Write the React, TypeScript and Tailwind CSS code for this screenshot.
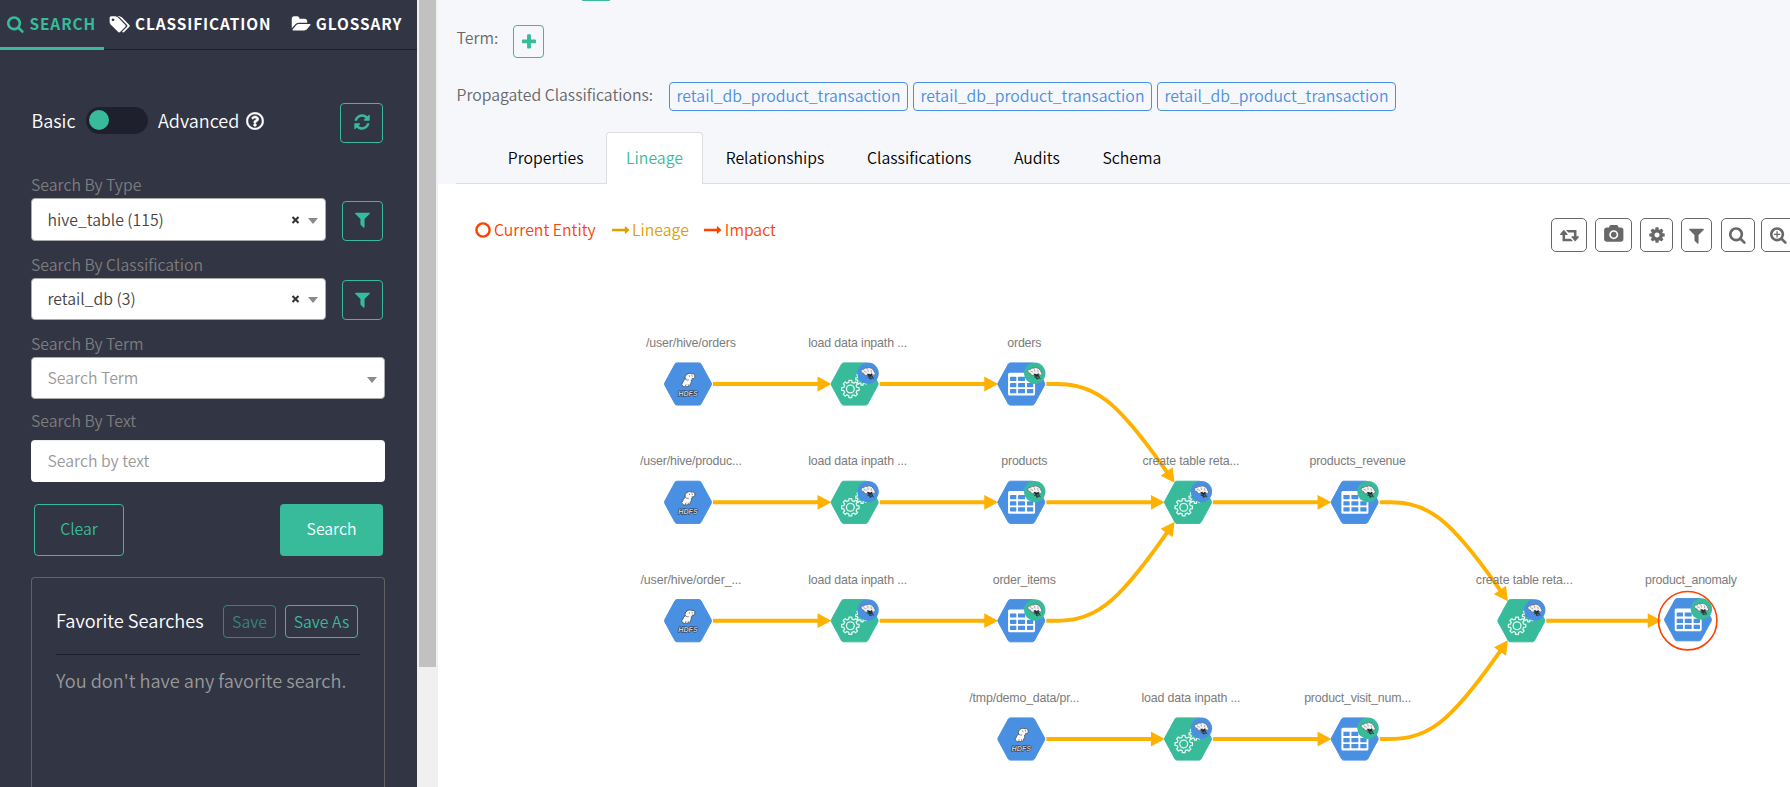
import type { ReactNode } from 'react';
import { FaRegQuestionCircle } from 'react-icons/fa';

/* ---------- icons ---------- */

const ICONS = {
  search:
    'M1152 832q0-185-131.5-316.5t-316.5-131.5-316.5 131.5-131.5 316.5 131.5 316.5 316.5 131.5 316.5-131.5 131.5-316.5zm512 832q0 52-38 90t-90 38q-54 0-90-38l-343-342q-179 124-399 124-143 0-273.5-55.5t-225-150-150-225-55.5-273.5 55.5-273.5 150-225 225-150 273.5-55.5 273.5 55.5 225 150 150 225 55.5 273.5q0 220-124 399l343 343q37 37 37 90z',
  zoomPlus:
    'M1152 832q0-185-131.5-316.5t-316.5-131.5-316.5 131.5-131.5 316.5 131.5 316.5 316.5 131.5 316.5-131.5 131.5-316.5zm512 832q0 52-38 90t-90 38q-54 0-90-38l-343-342q-179 124-399 124-143 0-273.5-55.5t-225-150-150-225-55.5-273.5 55.5-273.5 150-225 225-150 273.5-55.5 273.5 55.5 225 150 150 225 55.5 273.5q0 220-124 399l343 343q37 37 37 90zM1024 800v64q0 13-9.5 22.5t-22.5 9.5h-224v224q0 13-9.5 22.5t-22.5 9.5h-64q-13 0-22.5-9.5t-9.5-22.5v-224h-224q-13 0-22.5-9.5t-9.5-22.5v-64q0-13 9.5-22.5t22.5-9.5h224v-224q0-13 9.5-22.5t22.5-9.5h64q13 0 22.5 9.5t9.5 22.5v224h224q13 0 22.5 9.5t9.5 22.5z',
  refresh:
    'M1639 1056q0 5-1 7-64 268-268 434.5t-478 166.5q-146 0-282.5-55t-243.5-157l-129 129q-19 19-45 19t-45-19-19-45v-448q0-26 19-45t45-19h448q26 0 45 19t19 45-19 45l-137 137q71 66 161 102t187 36q134 0 250-65t186-179q11-17 53-117 8-23 30-23h192q13 0 22.5 9.5t9.5 22.5zm25-800v448q0 26-19 45t-45 19h-448q-26 0-45-19t-19-45 19-45l138-138q-148-137-349-137-134 0-250 65t-186 179q-11 17-53 117-8 23-30 23h-199q-13 0-22.5-9.5t-9.5-22.5v-7q65-268 270-434.5t480-166.5q146 0 284 55.5t245 156.5l130-129q19-19 45-19t45 19 19 45z',
  filter:
    'M1595 295q17 41-14 70l-493 493v742q0 42-39 59-13 5-25 5-27 0-45-19l-256-256q-19-19-19-45v-486l-493-493q-31-29-14-70 17-39 59-39h1280q42 0 59 39z',
  tags: 'M384 448q0-53-37.5-90.5t-90.5-37.5-90.5 37.5-37.5 90.5 37.5 90.5 90.5 37.5 90.5-37.5 37.5-90.5zm1067 576q0 53-37 90l-491 492q-39 37-91 37-53 0-90-37l-715-716q-38-37-64.5-101t-26.5-117v-416q0-52 38-90t90-38h416q53 0 117 26.5t102 64.5l715 714q37 39 37 91zm384 0q0 53-37 90l-491 492q-39 37-91 37-36 0-59-14t-53-45l470-470q37-37 37-90 0-52-37-91l-715-714q-38-38-102-64.5t-117-26.5h224q53 0 117 26.5t102 64.5l715 714q37 39 37 91z',
  folder:
    'M1943 952q0 31-31 66l-336 396q-43 51-120.5 86.5t-143.5 35.5h-1088q-34 0-60.5-13t-26.5-43q0-31 31-66l336-396q43-51 120.5-86.5t143.5-35.5h1088q34 0 60.5 13t26.5 43zm-343-344v160h-832q-94 0-197 47.5t-164 119.5l-337 396-5 6q0-4-.5-12.5t-.5-12.5v-960q0-92 66-158t158-66h320q92 0 158 66t66 158v32h544q92 0 158 66t66 158z',
  plus: 'M1600 736v192q0 40-28 68t-68 28h-416v416q0 40-28 68t-68 28h-192q-40 0-68-28t-28-68v-416h-416q-40 0-68-28t-28-68v-192q0-40 28-68t68-28h416v-416q0-40 28-68t68-28h192q40 0 68 28t28 68v416h416q40 0 68 28t28 68z',
  cog: 'M1152 896q0-106-75-181t-181-75-181 75-75 181 75 181 181 75 181-75 75-181zm512-109v222q0 12-8 23t-20 13l-185 28q-19 54-39 91 35 50 107 138 10 12 10 25t-9 23q-27 37-99 108t-94 71q-12 0-26-9l-138-108q-44 23-91 38-16 136-29 186-7 28-36 28h-222q-14 0-24.5-8.5t-11.5-21.5l-28-184q-49-16-90-37l-141 107q-10 9-25 9-14 0-25-11-126-114-165-168-7-10-7-23 0-12 8-23 15-21 51-66.5t54-70.5q-27-50-41-99l-183-27q-13-2-21-12.5t-8-23.5v-222q0-12 8-23t19-13l186-28q14-46 39-92-40-57-107-138-10-12-10-24 0-10 9-23 26-36 98.5-107.5t94.5-71.5q13 0 26 10l138 107q44-23 91-38 16-136 29-186 7-28 36-28h222q14 0 24.5 8.5t11.5 21.5l28 184q49 16 90 37l142-107q9-9 24-9 13 0 25 10 129 119 165 170 7 8 7 22 0 12-8 23-15 21-51 66.5t-54 70.5q26 50 41 98l183 28q13 2 21 12.5t8 23.5z',
  camera:
    'M960 672q119 0 203.5 84.5t84.5 203.5-84.5 203.5-203.5 84.5-203.5-84.5-84.5-203.5 84.5-203.5 203.5-84.5zm704-416q106 0 181 75t75 181v896q0 106-75 181t-181 75h-1408q-106 0-181-75t-75-181v-896q0-106 75-181t181-75h224l51-136q19-49 69.5-84.5t103.5-35.5h512q53 0 103.5 35.5t69.5 84.5l51 136h224zm-704 1152q185 0 316.5-131.5t131.5-316.5-131.5-316.5-316.5-131.5-316.5 131.5-131.5 316.5 131.5 316.5 316.5 131.5z',
  retweet:
    'M1280 1504q0 13-9.5 22.5t-22.5 9.5h-960q-8 0-13.5-2t-9-7-5.5-8-3-11.5-1-11.5v-600h-192q-26 0-45-19t-19-45q0-24 15-41l320-384q19-22 49-22t49 22l320 384q15 17 15 41 0 26-19 45t-45 19h-192v384h576q16 0 25 11l160 192q7 10 7 21zm640-416q0 24-15 41l-320 384q-20 23-49 23t-49-23l-320-384q-15-17-15-41 0-26 19-45t45-19h192v-384h-576q-16 0-25-12l-160-192q-7-9-7-20 0-13 9.5-22.5t22.5-9.5h960q8 0 13.5 2t9 7 5.5 8 3 11.5 1 11.5v600h192q26 0 45 19t19 45z',
  arrow:
    'M1728 893q0 14-10 24l-384 354q-16 14-35 6-19-9-19-29v-224h-1248q-14 0-23-9t-9-23v-192q0-14 9-23t23-9h1248v-224q0-21 19-29t35 5l384 350q10 10 10 23z',
};

function Icon({ name, className, box = '0 0 1792 1792' }: { name: keyof typeof ICONS; className: string; box?: string }) {
  return (
    <svg viewBox={box} fill="currentColor" overflow="visible" className={`shrink-0 ${className}`}>
      <path d={ICONS[name]} />
    </svg>
  );
}

/* ---------- sidebar ---------- */

function FieldLabel({ children, className }: { children: ReactNode; className: string }) {
  return <div className={`h-5 text-[#7d7d7d] ${className}`}>{children}</div>;
}

function Caret({ className }: { className: string }) {
  return <span className={`h-0 w-0 border-x-5 border-t-6 border-x-transparent border-t-[#8a8a8a] ${className}`} />;
}

function SelectRow({ value, className, gap }: { value: string; className: string; gap: string }) {
  return (
    <div className="flex items-end">
      <div className={`flex w-[295px] items-center rounded-[4px] border border-[#aaa] bg-white pr-[7px] pl-[15.5px] text-[#444] ${className}`}>
        <span className="grow leading-5">{value}</span>
        <svg viewBox="0 0 8 8" className="mr-2 h-2 w-[9px]">
          <path d="M1 1L7 7M7 1L1 7" stroke="#333" strokeWidth="2.1" />
        </svg>
        <Caret className="mt-[2px]" />
      </div>
      <button className={`ml-4 flex h-10 w-[41px] justify-center rounded-[4px] border border-[#38bb9b] pr-px text-[#38bb9b] ${gap}`}>
        <Icon name="filter" className="h-[19px] w-[19px]" />
      </button>
    </div>
  );
}

function Sidebar() {
  return (
    <aside className="flex w-[417px] shrink-0 flex-col bg-[#323544]">
      <nav className="flex h-[50px] shrink-0 border-b border-[#1d202c] text-[15.4px] font-bold tracking-[0.9px] text-white">
        <a className="z-10 -mb-px flex h-[50px] w-[104px] items-center border-b-3 border-[#38bb9b] pt-px pl-[7px] text-[#38bb9b]">
          <Icon name="search" className="mr-[4.5px] h-[18px] w-[18px]" />
          SEARCH
        </a>
        <a className="flex h-12 items-center pl-[6px]">
          <Icon name="tags" box="0 0 1920 1792" className="mr-[4px] h-[19px] w-[21px]" />
          CLASSIFICATION
        </a>
        <a className="flex h-12 items-center pl-[20px]">
          <Icon name="folder" box="0 0 1920 1792" className="mr-[5px] h-[18px] w-[19.5px]" />
          GLOSSARY
        </a>
      </nav>

      <div className="flex flex-col pr-8 pl-[31px]">
        <div className="mt-[53px] flex h-10 text-[18px] text-white">
          <span className="w-[55px] pl-[0.5px] leading-[35px]">Basic</span>
          <span className="mt-1 h-[27px] w-[62px] rounded-full bg-[#1e212d] p-[3px]">
            <span className="block h-5 w-5 rounded-full bg-[#38bb9b]" />
          </span>
          <span className="ml-[10px] w-[88px] leading-[35px]">Advanced</span>
          <FaRegQuestionCircle className="mt-[9px] h-[18px] w-[18px]" strokeWidth="14" stroke="currentColor" />
          <button className="mr-[2px] ml-auto flex h-10 w-[43px] justify-center rounded-[4px] border border-[#38bb9b] pt-[9px] text-[#38bb9b]">
            <Icon name="refresh" className="h-[18px] w-[18px]" />
          </button>
        </div>

        <FieldLabel className="mt-[32px] leading-5">Search By Type</FieldLabel>
        <div className="mt-[3px]">
          <SelectRow value="hive_table (115)" className="h-[43px]" gap="pt-[8px]" />
        </div>
        <FieldLabel className="mt-[13px] leading-[22px]">Search By Classification</FieldLabel>
        <div className="mt-1">
          <SelectRow value="retail_db (3)" className="h-[42px]" gap="pt-[9px]" />
        </div>
        <FieldLabel className="mt-[13px] leading-[22px]">Search By Term</FieldLabel>
        <div className="mt-1 flex h-[42px] items-center justify-between rounded-[4px] border border-[#aaa] bg-white pr-[7px] pl-[15.5px] text-[#999]">
          <span className="leading-5">Search Term</span>
          <Caret className="mt-[3px]" />
        </div>
        <FieldLabel className="mt-[11px] leading-[22px]">Search By Text</FieldLabel>
        <input
          placeholder="Search by text"
          className="mt-[10px] h-[42px] rounded-[4px] bg-white px-[16.5px] pb-px shadow-[inset_0_1px_1px_rgba(0,0,0,0.08)] outline-none placeholder:text-[#999]"
        />

        <div className="mt-[22px] flex h-[52px] justify-between pr-[2px] pl-[3px]">
          <button className="w-[90px] rounded-[4px] border border-[#38bb9b] pb-[2px] text-[#38bb9b]">Clear</button>
          <button className="w-[103px] rounded-[4px] bg-[#38bb9b] pb-[2px] text-white">Search</button>
        </div>

        <section className="mt-[21px] h-[240px] rounded-t-[4px] border border-b-0 border-[#626262] px-6 pt-[27px]">
          <div className="flex h-[50px] border-b border-[#1d202c]">
            <h3 className="w-[167px] text-[18.2px] leading-[31px] text-white">Favorite Searches</h3>
            <button className="h-[33px] w-[53px] rounded-[4px] border border-[#38bb9b] text-[#38bb9b] opacity-60">Save</button>
            <button className="ml-[9px] h-[33px] w-[73px] rounded-[4px] border border-[#38bb9b] text-[#38bb9b]">Save As</button>
          </div>
          <p className="pt-[10px] text-[18.2px] leading-[30px] text-[#999]">You don't have any favorite search.</p>
        </section>
      </div>
    </aside>
  );
}

/* ---------- lineage graph ---------- */

type Kind = 'hdfs' | 'process' | 'table';
const COLS = [0, 1, 2, 3, 4, 5, 6].map((i) => 688 + i * 166.67);
const ROWS = [384, 502.3, 620.7, 739];
const LABEL_BASELINES = [347, 465, 584, 702];
const GREEN = '#38bb9b';
const BLUE = '#4a90e2';

const NODES: { c: number; r: number; kind: Kind; label: string; width: number; current?: boolean }[] = [
  { c: 0, r: 0, kind: 'hdfs', label: '/user/hive/orders', width: 90 },
  { c: 1, r: 0, kind: 'process', label: 'load data inpath ...', width: 99 },
  { c: 2, r: 0, kind: 'table', label: 'orders', width: 34 },
  { c: 0, r: 1, kind: 'hdfs', label: '/user/hive/produc...', width: 102 },
  { c: 1, r: 1, kind: 'process', label: 'load data inpath ...', width: 99 },
  { c: 2, r: 1, kind: 'table', label: 'products', width: 46 },
  { c: 3, r: 1, kind: 'process', label: 'create table reta...', width: 97 },
  { c: 4, r: 1, kind: 'table', label: 'products_revenue', width: 96.5 },
  { c: 0, r: 2, kind: 'hdfs', label: '/user/hive/order_...', width: 101 },
  { c: 1, r: 2, kind: 'process', label: 'load data inpath ...', width: 99 },
  { c: 2, r: 2, kind: 'table', label: 'order_items', width: 63 },
  { c: 5, r: 2, kind: 'process', label: 'create table reta...', width: 97 },
  { c: 6, r: 2, kind: 'table', label: 'product_anomaly', width: 92, current: true },
  { c: 2, r: 3, kind: 'hdfs', label: '/tmp/demo_data/pr...', width: 110 },
  { c: 3, r: 3, kind: 'process', label: 'load data inpath ...', width: 99 },
  { c: 4, r: 3, kind: 'table', label: 'product_visit_num...', width: 107 },
];

const EDGES: [number, number, number][] = [
  // column of the source, source row, target row
  [0, 0, 0],
  [1, 0, 0],
  [2, 0, 1],
  [0, 1, 1],
  [1, 1, 1],
  [2, 1, 1],
  [3, 1, 1],
  [4, 1, 2],
  [0, 2, 2],
  [1, 2, 2],
  [2, 2, 1],
  [5, 2, 2],
  [2, 3, 3],
  [3, 3, 3],
  [4, 3, 2],
];

function Edge({ col, from, to }: { col: number; from: number; to: number }) {
  const x0 = COLS[col] + 25;
  const y0 = ROWS[from];
  if (from === to) {
    const tip = COLS[col + 1] - (col === 5 ? 26.5 : 23.3);
    return (
      <g>
        <path d={`M${x0} ${y0}H${tip - 11}`} fill="none" stroke="#ffb100" strokeWidth="3.9" />
        <path d={`M${tip} ${y0}l-13.8 -7.4v14.8z`} fill="#ffb100" />
      </g>
    );
  }
  const s = to > from ? 1 : -1;
  const x1 = COLS[col] + 83.3;
  const x2 = COLS[col + 1] - 13.4;
  const y2 = ROWS[to] - s * 19.5;
  const angle = (Math.atan2(y2 - y0, x2 - x1) * 180) / Math.PI;
  const mix = (a: number, b: number, t: number) => a + (b - a) * t;
  const d = [
    `M${x0} ${y0}H${mix(x0, x1, 1 / 6)}`,
    `C${mix(x0, x1, 1 / 3)} ${y0} ${mix(x0, x1, 2 / 3)} ${y0} ${(x0 + 4 * x1 + x2) / 6} ${(5 * y0 + y2) / 6}`,
    `C${mix(x1, x2, 1 / 3)} ${mix(y0, y2, 1 / 3)} ${mix(x1, x2, 2 / 3)} ${mix(y0, y2, 2 / 3)} ${mix(x1, x2, 5 / 6)} ${mix(y0, y2, 5 / 6)}`,
    `L${mix(x1, x2, 0.92)} ${mix(y0, y2, 0.92)}`,
  ].join('');
  return (
    <g>
      <path d={d} fill="none" stroke="#ffb100" strokeWidth="3.9" />
      <path d="M0 0l-13.8 -7.4v14.8z" fill="#ffb100" transform={`translate(${x2} ${y2}) rotate(${angle})`} />
    </g>
  );
}

function gearPath(teeth: number, outer: number, inner: number) {
  const pts: string[] = [];
  const step = (Math.PI * 2) / teeth;
  for (let i = 0; i < teeth; i++) {
    const a = i * step - Math.PI / 2;
    for (const [o, r] of [
      [-0.3, inner],
      [-0.2, outer],
      [0.2, outer],
      [0.3, inner],
    ]) {
      pts.push(`${(Math.cos(a + o * step) * r).toFixed(2)} ${(Math.sin(a + o * step) * r).toFixed(2)}`);
    }
  }
  return `M${pts.join('L')}Z`;
}

function HiveBadge({ color }: { color: string }) {
  return (
    <g transform="translate(13.4 -10.7)">
      <circle r="10.7" fill={color} />
      <path d="M-1.4 2L4 2M-.6 3.8L4.6 3.4M1.2 5.2L4.4 5M2 0L5.6 5.6M.2 1.6L2.6 6.2" stroke="#33373b" strokeWidth="1" />
      <path
        d="M-7 -2.6Q-6.4 -4.6 -4.2 -4Q-3 -6 -1 -5Q.6 -6.4 2.2 -5.4Q4.2 -5.4 4.8 -3.6Q6.6 -2.8 6.2 -1.2Q7.8 -.2 7 1.4Q5.6 2.6 4 1Q2 1.8 .6 .6Q-.6 2.8 -2.6 2Q-4 2 -4.4 0Q-7 0 -7 -2.6Z"
        fill="#f2f2f2"
        stroke="#5d6267"
        strokeWidth=".7"
      />
      <path d="M-4.4 -2.4L-1.6 -1M-.4 -4L.2 -1.6M3 -3.4L3.4 -.8" stroke="#9a9a9a" strokeWidth=".8" />
      <path d="M-.8 .6L2.4 2.2M3.8 .4L1.8 3" stroke="#222" strokeWidth="1.1" />
    </g>
  );
}

function NodeArt({ kind }: { kind: Kind }) {
  return (
    <g>
      <path
        d="M-11 -21.1H11Q12.3 -21.1 13 -20L23.2 -1.2Q23.8 0 23.2 1.2L13 20Q12.3 21.1 11 21.1H-11Q-12.3 21.1 -13 20L-23.2 1.2Q-23.8 0 -23.2 -1.2L-13 -20Q-12.3 -21.1 -11 -21.1Z"
        fill={kind === 'process' ? GREEN : BLUE}
        stroke={kind === 'process' ? GREEN : BLUE}
        strokeWidth="1"
      />
      {kind === 'hdfs' && (
        <g>
          <path
            d="M-1 -9.8C.4 -11 2.4 -10.8 3.6 -10.2C5.6 -11 7.4 -9.6 6.8 -7.6C7 -6 6 -5.2 5 -5.6C4.6 -4.6 4 -4.2 3.2 -3.8C3.8 -2.4 3 -.6 2.2 .2C2.6 1.6 1.4 2.6 .2 2C-.6 2.8 -2 2.8 -2.4 2.2C-3.4 3.2 -5.2 2.8 -5.4 1.4C-6.8 .8 -6.4 -.8 -5 -1.6C-4.8 -3.2 -4 -4.2 -2.6 -4.8C-3.6 -6.6 -2.6 -9 -1 -9.8Z"
            fill="#fafafa"
            stroke="#46505b"
            strokeWidth=".9"
          />
          <path d="M1.2 -8.6L1.6 -7.2M4 -8.8L4.4 -7.4M3.6 -5.8L5 -5.4M-2.4 -4.6Q-.8 -3.6 .8 -4M-2.6 2L-2 .4M.4 1.8L.2 .4" fill="none" stroke="#5f6872" strokeWidth=".8" />
          <text
            x="0"
            y="11.6"
            textAnchor="middle"
            textLength="19.5"
            lengthAdjust="spacingAndGlyphs"
            className="font-['Liberation_Sans',sans-serif] text-[8px] font-bold italic"
            fill="#c9ced4"
            stroke="#2c333d"
            strokeWidth="1.2"
            paintOrder="stroke"
          >
            HDFS
          </text>
        </g>
      )}
      {kind === 'process' && (
        <g fill="none" stroke="#e9f8f4" strokeWidth="1.25" strokeLinejoin="round">
          <g transform="translate(-4.3 5)">
            <path d={gearPath(8, 8.8, 6.8)} />
            <circle r="3.9" />
          </g>
          <g transform="translate(7.4 -5.2)">
            <path d={gearPath(8, 6.4, 4.8)} />
          </g>
        </g>
      )}
      {kind === 'table' && (
        <g>
          <rect x="-13.3" y="-11.3" width="27" height="22.8" rx="1.6" fill="#fff" />
          {[-7.3, -1, 5].map((y) =>
            [-11.3, -3.3, 5.6].map((x) => <rect key={`${x}${y}`} x={x} y={y} width={x === -3.3 ? 7 : 6.3} height="4.2" rx=".4" fill={BLUE} />),
          )}
        </g>
      )}
      {kind !== 'hdfs' && <HiveBadge color={kind === 'process' ? BLUE : GREEN} />}
    </g>
  );
}

function LineageGraph() {
  return (
    <svg viewBox="438 280 1352 507" className="h-[507px] w-[1352px] shrink-0">
      {EDGES.map(([col, from, to]) => (
        <Edge key={`${col}-${from}`} col={col} from={from} to={to} />
      ))}
      {NODES.map((n) => {
        const x = COLS[n.c];
        const y = ROWS[n.r];
        return (
          <g key={`${n.c}-${n.r}`}>
            {n.current && <circle cx={x - 0.3} cy={y} r="29.2" fill="none" stroke="#fb4200" strokeWidth="1.6" />}
            <g transform={`translate(${x} ${n.current ? y - 1 : y})`}>
              <NodeArt kind={n.kind} />
            </g>
            <text
              x={x + 3}
              y={LABEL_BASELINES[n.r]}
              textAnchor="middle"
              textLength={n.width}
              className="font-['Liberation_Sans',Arial,sans-serif] text-[12.4px]"
              fill="#7c7c7c"
            >
              {n.label}
            </text>
          </g>
        );
      })}
    </svg>
  );
}

/* ---------- main area ---------- */

const TABS_AFTER = ['Relationships', 'Classifications', 'Audits', 'Schema'];

function ToolButton({ children, className }: { children: ReactNode; className: string }) {
  return (
    <button className={`flex h-[34px] shrink-0 items-center justify-center rounded-[5px] border border-[#686868] text-[#686868] ${className}`}>
      {children}
    </button>
  );
}

function Main() {
  return (
    <main className="flex min-w-0 grow flex-col overflow-hidden bg-white">
      <header className="flex h-[184px] shrink-0 flex-col bg-[#f6f7fb] pl-[18px] text-[#686868]">
        <div className="ml-[126px] h-px w-[28px] shrink-0 rounded-b-[4px] bg-[#38bb9b]" />
        <div className="mt-6 flex h-[33px]">
          <span className="w-[57px] pl-[0.5px] leading-[25px]">Term:</span>
          <button className="flex w-[31px] items-center justify-center rounded-[4px] border border-[#38bb9b] text-[#38bb9b]">
            <Icon name="plus" className="h-[18px] w-[18px]" />
          </button>
        </div>
        <div className="mt-6 flex h-[29px] gap-[5px]">
          <span className="w-[208px] pl-[0.5px] leading-[26px]">Propagated Classifications:</span>
          {[0, 1, 2].map((i) => (
            <span key={i} className="w-[239px] rounded-[4px] border border-[#4a90e2] text-center leading-[26px] text-[#4a90e2]">
              retail_db_product_transaction
            </span>
          ))}
        </div>
        <nav className="mt-[21px] flex h-[52px] border-b border-[#ddd] pl-[31px] leading-[50px] text-black">
          <a className="w-[119px] pt-px pl-[20.8px]">Properties</a>
          <a className="-mb-px w-[97px] rounded-t-[4px] border border-b-0 border-[#ddd] bg-white text-center text-[#38bb9b]">Lineage</a>
          {TABS_AFTER.map((t) => (
            <a key={t} className="pt-px pr-[20px] pl-[22.7px]">
              {t}
            </a>
          ))}
        </nav>
      </header>

      <div className="flex h-[96px] shrink-0 pl-[36.5px]">
        <div className="mt-[31px] flex h-[30px] items-center">
          <span className="flex items-center text-[#fb4200]">
            <svg viewBox="0 0 16 16" className="mr-[3.5px] h-4 w-4">
              <circle cx="8" cy="8" r="6.6" fill="none" stroke="currentColor" strokeWidth="2.4" />
            </svg>
            Current Entity
          </span>
          <span className="ml-[16px] flex items-center text-[#e0a000]">
            <Icon name="arrow" className="mr-[2.5px] h-[18px] w-[18px]" />
            Lineage
          </span>
          <span className="ml-[15.5px] flex items-center text-[#fb4200]">
            <Icon name="arrow" className="mr-[2.5px] h-[18px] w-[18px]" />
            Impact
          </span>
        </div>
        <div className="mt-[34px] -mr-4 ml-auto flex">
          <ToolButton className="w-9">
            <Icon name="retweet" box="0 0 1920 1792" className="h-[18px] w-[19px]" />
          </ToolButton>
          <ToolButton className="ml-2 w-[37px]">
            <Icon name="camera" box="0 0 1920 1792" className="mb-[2px] h-[18px] w-[19.5px]" />
          </ToolButton>
          <ToolButton className="ml-2 w-[33px]">
            <Icon name="cog" className="h-[18px] w-[18px]" />
          </ToolButton>
          <ToolButton className="ml-2 w-[31px]">
            <Icon name="filter" className="h-[19px] w-[19px]" />
          </ToolButton>
          <ToolButton className="ml-[9px] w-[34px]">
            <Icon name="search" className="h-[18px] w-[18px]" />
          </ToolButton>
          <ToolButton className="ml-[6px] w-[45px] pr-[10px]">
            <Icon name="zoomPlus" className="h-[18px] w-[18px]" />
          </ToolButton>
        </div>
      </div>

      <LineageGraph />
    </main>
  );
}

export default function App() {
  return (
    <div className="flex h-[787px] w-[1790px] overflow-hidden bg-white font-['Noto_Sans_CJK_SC',sans-serif] text-[15.8px] font-[350]">
      <Sidebar />
      <div className="w-[21px] shrink-0 bg-[#f0f0f0] px-[2px]">
        <div className="h-[667px] w-[17px] bg-[#c1c1c1]" />
      </div>
      <Main />
    </div>
  );
}
